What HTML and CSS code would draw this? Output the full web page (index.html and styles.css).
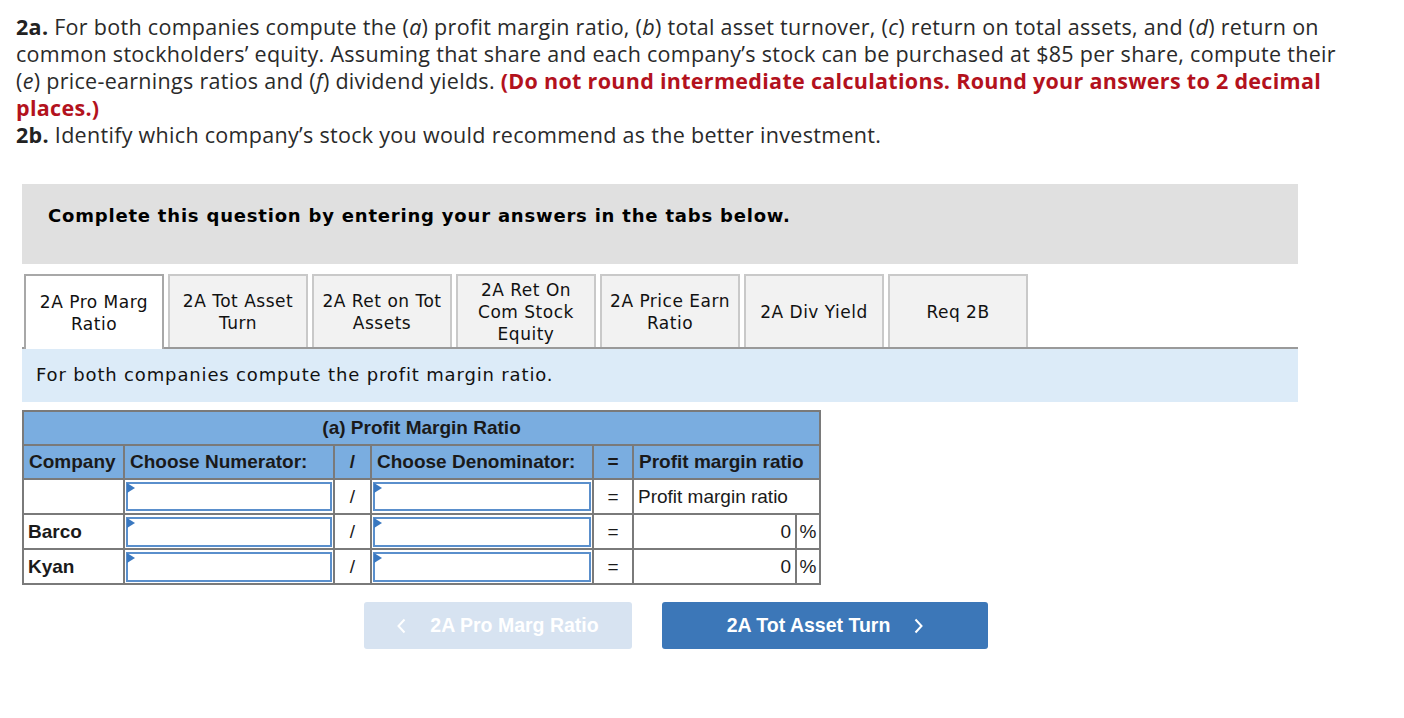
FILE: index.html
```html
<!DOCTYPE html>
<html>
<head>
<meta charset="utf-8">
<link rel="stylesheet" href="styles.css">
</head>
<body>
<div class="page">
  <div class="question">
    <p><b>2a.</b> For both companies compute the (<i>a</i>) profit margin ratio, (<i>b</i>) total asset turnover, (<i>c</i>) return on total assets, and (<i>d</i>) return on common stockholders’ equity. Assuming that share and each company’s stock can be purchased at $85 per share, compute their (<i>e</i>) price-earnings ratios and (<i>f</i>) dividend yields. <strong class="red">(Do not round intermediate calculations. Round your answers to 2 decimal places.)</strong></p>
    <p><b>2b.</b> Identify which company’s stock you would recommend as the better investment.</p>
  </div>

  <div class="work">
    <div class="banner">Complete this question by entering your answers in the tabs below.</div>

    <div class="tabs">
      <div class="tab active">2A Pro Marg Ratio</div>
      <div class="tab">2A Tot Asset Turn</div>
      <div class="tab">2A Ret on Tot Assets</div>
      <div class="tab">2A Ret On Com Stock Equity</div>
      <div class="tab">2A Price Earn Ratio</div>
      <div class="tab">2A Div Yield</div>
      <div class="tab">Req 2B</div>
    </div>

    <div class="info">For both companies compute the profit margin ratio.</div>

    <table class="grid">
      <colgroup>
        <col class="c-co"><col class="c-num"><col class="c-op"><col class="c-den"><col class="c-eq"><col class="c-res"><col class="c-pct">
      </colgroup>
      <tr class="title"><th colspan="7">(a) Profit Margin Ratio</th></tr>
      <tr class="head">
        <th class="left">Company</th>
        <th class="left">Choose Numerator:</th>
        <th>/</th>
        <th class="left">Choose Denominator:</th>
        <th>=</th>
        <th class="left" colspan="2">Profit margin ratio</th>
      </tr>
      <tr class="r1">
        <td></td>
        <td class="in"><div class="field"></div></td>
        <td class="op">/</td>
        <td class="in"><div class="field"></div></td>
        <td class="op">=</td>
        <td class="lbl" colspan="2">Profit margin ratio</td>
      </tr>
      <tr class="r2">
        <td class="co">Barco</td>
        <td class="in"><div class="field"></div></td>
        <td class="op">/</td>
        <td class="in"><div class="field"></div></td>
        <td class="op">=</td>
        <td class="val">0</td>
        <td class="pct">%</td>
      </tr>
      <tr class="r2">
        <td class="co">Kyan</td>
        <td class="in"><div class="field"></div></td>
        <td class="op">/</td>
        <td class="in"><div class="field"></div></td>
        <td class="op">=</td>
        <td class="val">0</td>
        <td class="pct">%</td>
      </tr>
    </table>

    <div class="nav">
      <button class="btn prev">
        <svg class="chev" width="9" height="16" viewBox="0 0 9 16"><polyline points="7.5,1.5 1.5,8 7.5,14.5" fill="none" stroke="#ffffff" stroke-width="2"/></svg>
        <span>2A Pro Marg Ratio</span>
      </button>
      <button class="btn next">
        <span>2A Tot Asset Turn</span>
        <svg class="chev" width="9" height="16" viewBox="0 0 9 16"><polyline points="1.5,1.5 7.5,8 1.5,14.5" fill="none" stroke="#ffffff" stroke-width="2"/></svg>
      </button>
    </div>
  </div>
</div>
</body>
</html>
```

FILE: styles.css
```css
html, body {
  margin: 0;
  padding: 0;
  background: #ffffff;
}

.page {
  padding: 13px 0 0 16px;
}

.question {
  width: 1330px;
  font-family: "Open Sans", "Noto Sans", sans-serif;
  font-size: 21.5px;
  letter-spacing: 0.3px;
  line-height: 27px;
  color: #2a2a2a;
}

.question p {
  margin: 0;
}

.question b {
  font-weight: 700;
  color: #222;
}

.question .red {
  color: #b3121d;
  font-weight: 700;
}

.work {
  margin: 36px 0 0 6px;
  width: 1276px;
}

.banner {
  background: #e0e0e0;
  height: 80px;
  box-sizing: border-box;
  padding: 21px 0 0 26px;
  font-family: "DejaVu Sans", Verdana, sans-serif;
  font-weight: 700;
  font-size: 18px;
  letter-spacing: 0.8px;
  color: #000;
}

.tabs {
  display: flex;
  margin-top: 10px;
  padding-left: 2px;
  border-bottom: 2px solid #9a9a9a;
  height: 73px;
  box-sizing: content-box;
}

.tab {
  width: 140px;
  box-sizing: border-box;
  margin-right: 4px;
  background: #f2f2f2;
  border: 2px solid #c9c9c9;
  border-bottom: none;
  display: flex;
  align-items: center;
  justify-content: center;
  text-align: center;
  padding: 0 4px;
  font-family: "DejaVu Sans", Verdana, sans-serif;
  font-size: 17px;
  letter-spacing: 0.5px;
  line-height: 22px;
  color: #111;
}

.tab.active {
  background: #ffffff;
  border-color: #a8a8a8;
  height: 75px;
  margin-bottom: -2px;
}

.info {
  background: #dcebf8;
  height: 53px;
  box-sizing: border-box;
  padding: 15px 0 0 14px;
  font-family: "DejaVu Sans", Verdana, sans-serif;
  font-size: 18px;
  letter-spacing: 0.85px;
  color: #111;
}

.grid {
  margin-top: 8px;
  border-collapse: collapse;
  border: 2px solid #7a7a7a;
  font-family: "Liberation Sans", Arial, sans-serif;
  font-size: 19px;
  color: #1a1a1a;
  table-layout: fixed;
  width: 799px;
}

.c-co { width: 101px; }
.c-num { width: 210px; }
.c-op { width: 37px; }
.c-den { width: 222px; }
.c-eq { width: 40px; }
.c-res { width: 163px; }
.c-pct { width: 24px; }

.grid th, .grid td {
  border: 2px solid #7a7a7a;
  padding: 0;
}

.grid th {
  background: #7aade0;
  font-weight: 700;
  height: 32px;
  text-align: center;
}

.grid th.left {
  text-align: left;
  padding-left: 5px;
}

.grid td {
  height: 31px;
  background: #fff;
}

.grid td.co {
  font-weight: 700;
  padding-left: 4px;
}

.grid td.op {
  text-align: center;
}

.grid td.lbl {
  padding-left: 4px;
}

.grid td.val {
  text-align: right;
  padding-right: 4px;
}

.grid td.pct {
  text-align: center;
}

.grid td.in {
  padding: 1px;
}

.field {
  position: relative;
  height: 29px;
  box-sizing: border-box;
  border: 2px solid #5a8fcc;
  background: #fff;
}

.r2 .field {
  height: 30px;
}

.field::before {
  content: "";
  position: absolute;
  left: -1px;
  top: -1px;
  border-style: solid;
  border-width: 5px 0 5px 8px;
  border-color: transparent transparent transparent #3a78c0;
}

.nav {
  display: flex;
  gap: 30px;
  margin: 17px 0 0 342px;
}

.btn {
  height: 47px;
  border: none;
  border-radius: 3px;
  font-family: "Liberation Sans", Arial, sans-serif;
  font-weight: 700;
  font-size: 19.5px;
  color: #fff;
  display: flex;
  align-items: center;
  justify-content: center;
  gap: 24px;
  padding: 0;
}

.btn.prev {
  width: 268px;
  background: #d7e3f1;
}

.btn.next {
  width: 326px;
  background: #3c77b8;
}

.chev {
  display: block;
}
```
